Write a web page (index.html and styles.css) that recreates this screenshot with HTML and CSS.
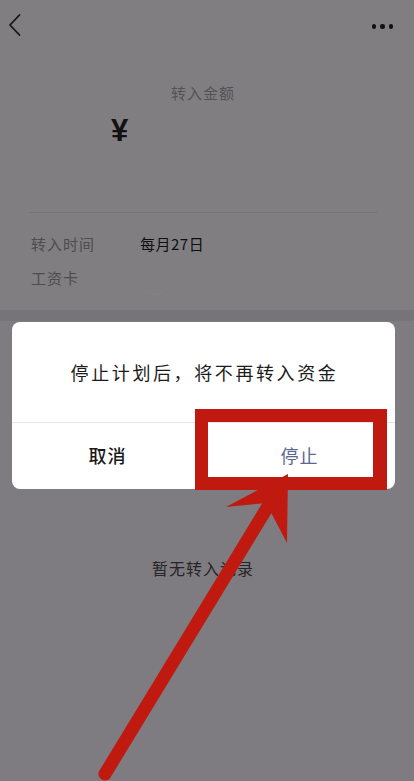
FILE: index.html
```html
<!DOCTYPE html>
<html lang="zh">
<head>
<meta charset="utf-8">
<title>转入计划</title>
<link rel="stylesheet" href="styles.css">
</head>
<body>
<div class="screen">
  <section class="top">
    <header class="nav">
      <svg class="back" width="14" height="24" viewBox="0 0 14 24"><path d="M11.5 2 L2 12 L11.5 22" fill="none" stroke="#161616" stroke-width="1.8" stroke-linecap="round" stroke-linejoin="round"/></svg>
      <div class="more"><span></span><span></span><span></span></div>
    </header>
    <div class="content">
      <div class="title">转入金额</div>
      <div class="amount"><span class="yen">¥</span></div>
      <div class="divider"></div>
      <div class="row"><span class="label">转入时间</span><span class="value">每月27日</span></div>
      <div class="row"><span class="label">工资卡</span><span class="value"><span class="bank"></span></span></div>
    </div>
  </section>
  <div class="band"></div>
  <section class="bottom">
    <div class="empty">暂无转入记录</div>
  </section>

  <div class="dialog">
    <div class="msg">停止计划后，将不再转入资金</div>
    <div class="actions">
      <div class="btn cancel">取消</div>
      <div class="btn stop">停止</div>
    </div>
  </div>

  <div class="highlight"></div>
  <svg class="arrow" width="414" height="781" viewBox="0 0 414 781">
    <line x1="105" y1="774" x2="270" y2="503" stroke="#c01a10" stroke-width="13" stroke-linecap="round"/>
    <polygon points="288,474 226,507 266,503 287,543" fill="#c01a10"/>
  </svg>
</div>
</body>
</html>
```
FILE: styles.css
```css
* { box-sizing: border-box; }
html, body {
  margin: 0;
  padding: 0;
  background: #7e7c80;
}
body {
  font-family: "Noto Sans CJK SC", "Noto Sans", sans-serif;
}
.screen {
  position: relative;
  width: 414px;
  height: 781px;
  overflow: hidden;
  background: #7e7c80;
}
.top {
  height: 310px;
  background: #807e81;
}
.nav {
  height: 52px;
  display: flex;
  align-items: flex-start;
  justify-content: space-between;
  padding: 13px 21px 0 8px;
}
.back { display: block; }
.more {
  display: flex;
  gap: 4px;
  margin-top: 11px;
}
.more span {
  width: 4.5px;
  height: 4.5px;
  border-radius: 50%;
  background: #111;
}
.content {
  width: 406px;
  display: flex;
  flex-direction: column;
}
.title {
  margin-top: 31px;
  height: 20px;
  line-height: 20px;
  font-size: 15px;
  letter-spacing: 1px;
  color: #545256;
  text-align: center;
}
.amount {
  margin-top: 8px;
  height: 40px;
  line-height: 40px;
  padding-left: 111px;
}
.yen {
  font-family: "Liberation Sans", Arial, sans-serif;
  font-weight: 700;
  font-size: 31px;
  color: #111;
}
.divider {
  margin: 61px 28px 0 29px;
  height: 1px;
  background: #777579;
}
.row {
  margin-top: 0;
  height: 34px;
  display: flex;
  align-items: center;
  padding-left: 31px;
  font-size: 15px;
}
.divider + .row { margin-top: 13px; }
.label {
  width: 109px;
  color: #4e4c4f;
  letter-spacing: 1px;
}
.value {
  color: #0f0f10;
  letter-spacing: 0.5px;
  position: relative;
}
.bank {
  display: block;
  width: 26px;
  height: 26px;
  margin-left: 1px;
  margin-top: 10px;
  border-radius: 50%;
  border-bottom: 1px solid #858386;
}
.band {
  height: 11px;
  background: #767478;
}
.bottom {
  width: 406px;
}
.empty {
  margin-top: 237px;
  height: 20px;
  line-height: 20px;
  text-align: center;
  font-size: 16px;
  letter-spacing: 1px;
  color: #262527;
}
.dialog {
  position: absolute;
  left: 12px;
  top: 322px;
  width: 383px;
  height: 167px;
  background: #fff;
  border-radius: 8px;
  display: flex;
  flex-direction: column;
}
.msg {
  height: 101px;
  display: flex;
  align-items: center;
  justify-content: center;
  font-size: 18px;
  letter-spacing: 2.6px;
  color: #1c1c1c;
  border-bottom: 1px solid #e6e6e6;
  padding-left: 2px;
}
.actions {
  flex: 1;
  display: flex;
}
.btn {
  flex: 1;
  display: flex;
  align-items: center;
  justify-content: center;
  font-size: 18px;
  letter-spacing: 1px;
  padding-bottom: 2px;
}
.cancel {
  color: #1a1a1a;
  font-weight: 500;
  border-right: 1px solid #e6e6e6;
}
.stop {
  color: #5a6791;
}
.highlight {
  position: absolute;
  left: 195px;
  top: 409px;
  width: 192px;
  height: 81px;
  border: 13px solid #c01a10;
  border-right-width: 14px;
}
.arrow {
  position: absolute;
  left: 0;
  top: 0;
  pointer-events: none;
}
```
